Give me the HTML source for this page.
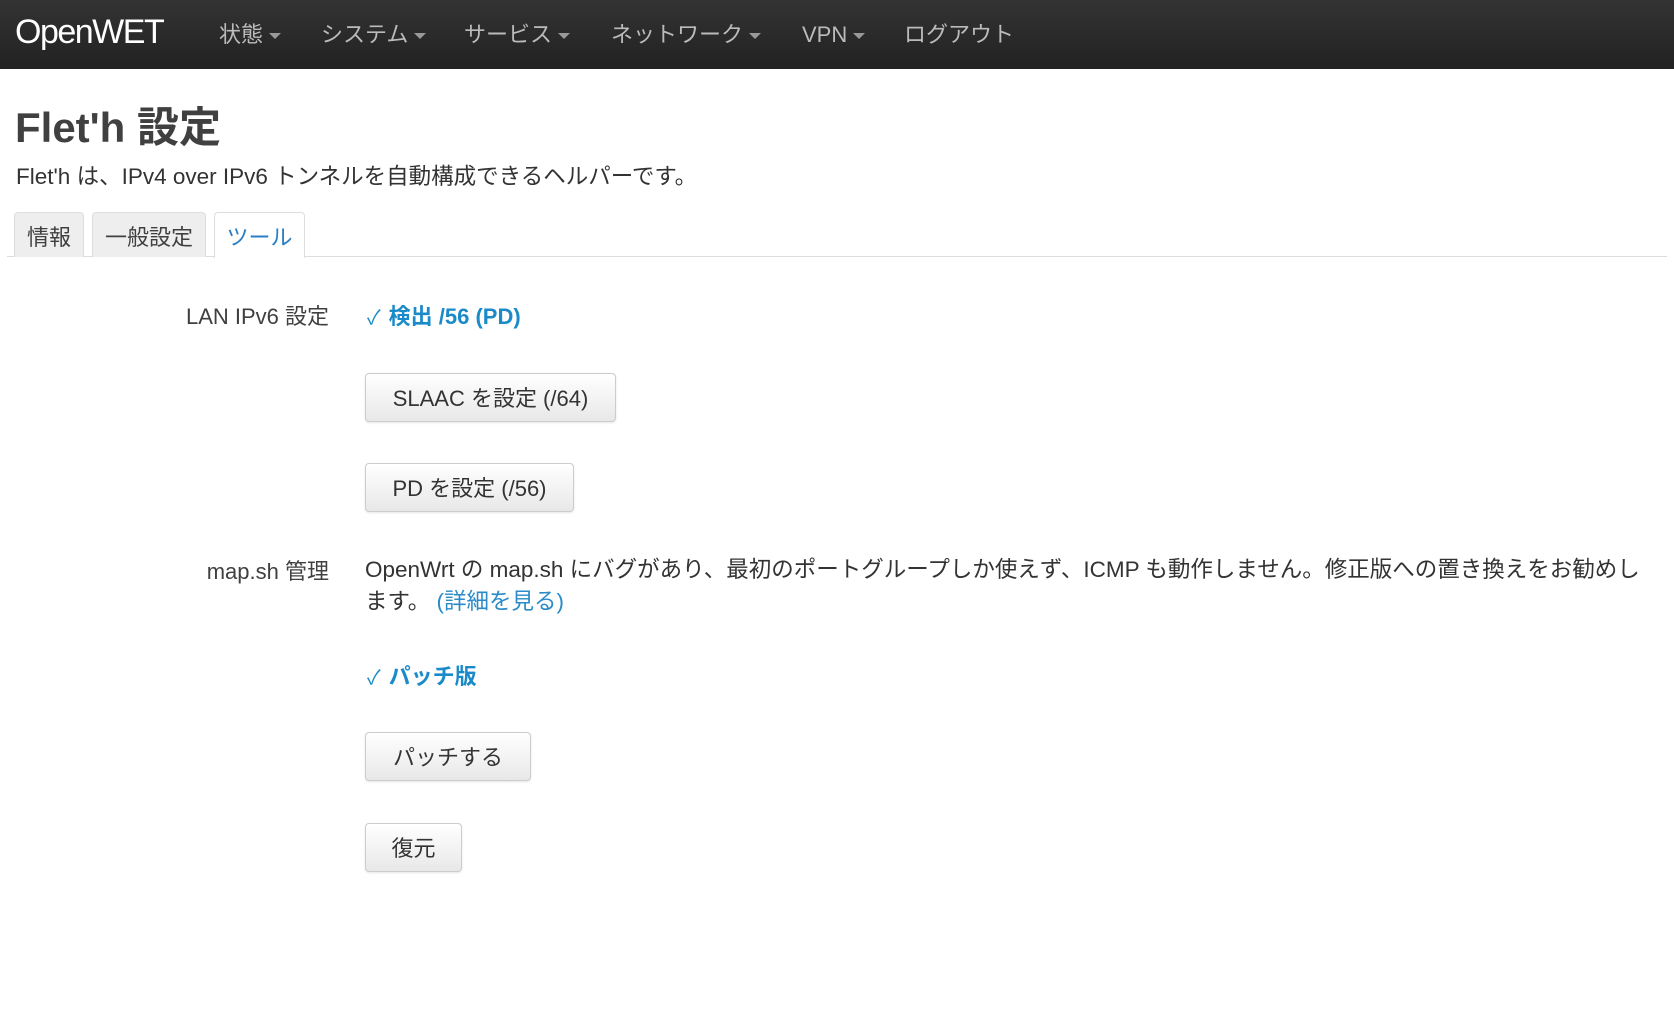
<!DOCTYPE html>
<html><head><meta charset="utf-8"><style>
*{margin:0;padding:0;box-sizing:border-box}
body{width:1674px;height:1009px;background:#fff;font-family:"Liberation Sans","Noto Sans CJK JP",sans-serif;color:#404040;position:relative;overflow:hidden}
.nav{position:absolute;left:0;top:0;width:1674px;height:69px;background:linear-gradient(#333,#222);}
.logo{position:absolute;left:15px;top:13px;font-size:34px;color:#fff;font-weight:300;letter-spacing:-1.5px}
.m{position:absolute;top:20px;height:30px;line-height:30px;font-size:22px;color:#bbb;white-space:nowrap}
.m .c{display:inline-block;width:0;height:0;border-left:6px solid transparent;border-right:6px solid transparent;border-top:6px solid #999;vertical-align:middle;margin-left:6px}
.a{position:absolute;white-space:nowrap}
h1{position:absolute;left:15px;top:98px;font-size:42px;font-weight:bold;color:#404040;line-height:60px}
.tab{position:absolute;top:212px;height:45px;border:1px solid #ddd;border-bottom:none;border-radius:4px 4px 0 0;background:#eee;font-size:22px;color:#404040;padding-top:7px;text-align:center}
.line{position:absolute;left:7px;top:256px;width:1660px;height:1px;background:#ddd}
.lbl{position:absolute;right:1345px;font-size:22px;white-space:nowrap}
.ok{position:absolute;left:367px;font-size:22px;color:#1a8bc8;font-weight:bold;white-space:nowrap}
.ok .k{font-weight:normal;margin-right:8px;font-size:20px}
.btn{position:absolute;left:365px;height:49px;border:1px solid #ccc;border-radius:4px;background:linear-gradient(#fff,#e8e8e8);font-size:22px;color:#333;padding-top:7px;text-align:center;box-shadow:0 1px 2px rgba(0,0,0,.1);white-space:nowrap}
</style></head><body>
<div class="nav">
<div class="logo">OpenWET</div>
<div class="m" style="left:219px">状態<span class="c"></span></div>
<div class="m" style="left:321px">システム<span class="c"></span></div>
<div class="m" style="left:464px">サービス<span class="c"></span></div>
<div class="m" style="left:611px">ネットワーク<span class="c"></span></div>
<div class="m" style="left:802px">VPN<span class="c"></span></div>
<div class="m" style="left:904px">ログアウト</div>
</div>
<h1>Flet'h 設定</h1>
<div class="a" style="left:16px;top:159px;font-size:22.5px;color:#333">Flet'h は、IPv4 over IPv6 トンネルを自動構成できるヘルパーです。</div>
<div class="line"></div>
<div class="tab" style="left:14px;width:70px">情報</div>
<div class="tab" style="left:92px;width:114px">一般設定</div>
<div class="tab" style="left:214px;width:91px;background:#fff;color:#2a7fc4;height:46px">ツール</div>
<div class="lbl" style="top:299px">LAN IPv6 設定</div>
<div class="ok" style="top:299px"><span class="k">✓</span>検出 /56 (PD)</div>
<div class="btn" style="top:373px;width:251px">SLAAC を設定 (/64)</div>
<div class="btn" style="top:463px;width:209px">PD を設定 (/56)</div>
<div class="lbl" style="top:554px">map.sh 管理</div>
<div class="a" style="left:365px;top:554px;font-size:22.5px;line-height:32px;color:#333">OpenWrt の map.sh にバグがあり、最初のポートグループしか使えず、ICMP も動作しません。修正版への置き換えをお勧めし<br>ます。 <span style="color:#2a8bc8">(詳細を見る)</span></div>
<div class="ok" style="top:659px"><span class="k">✓</span>パッチ版</div>
<div class="btn" style="top:732px;width:166px">パッチする</div>
<div class="btn" style="top:823px;width:97px">復元</div>
</body></html>
